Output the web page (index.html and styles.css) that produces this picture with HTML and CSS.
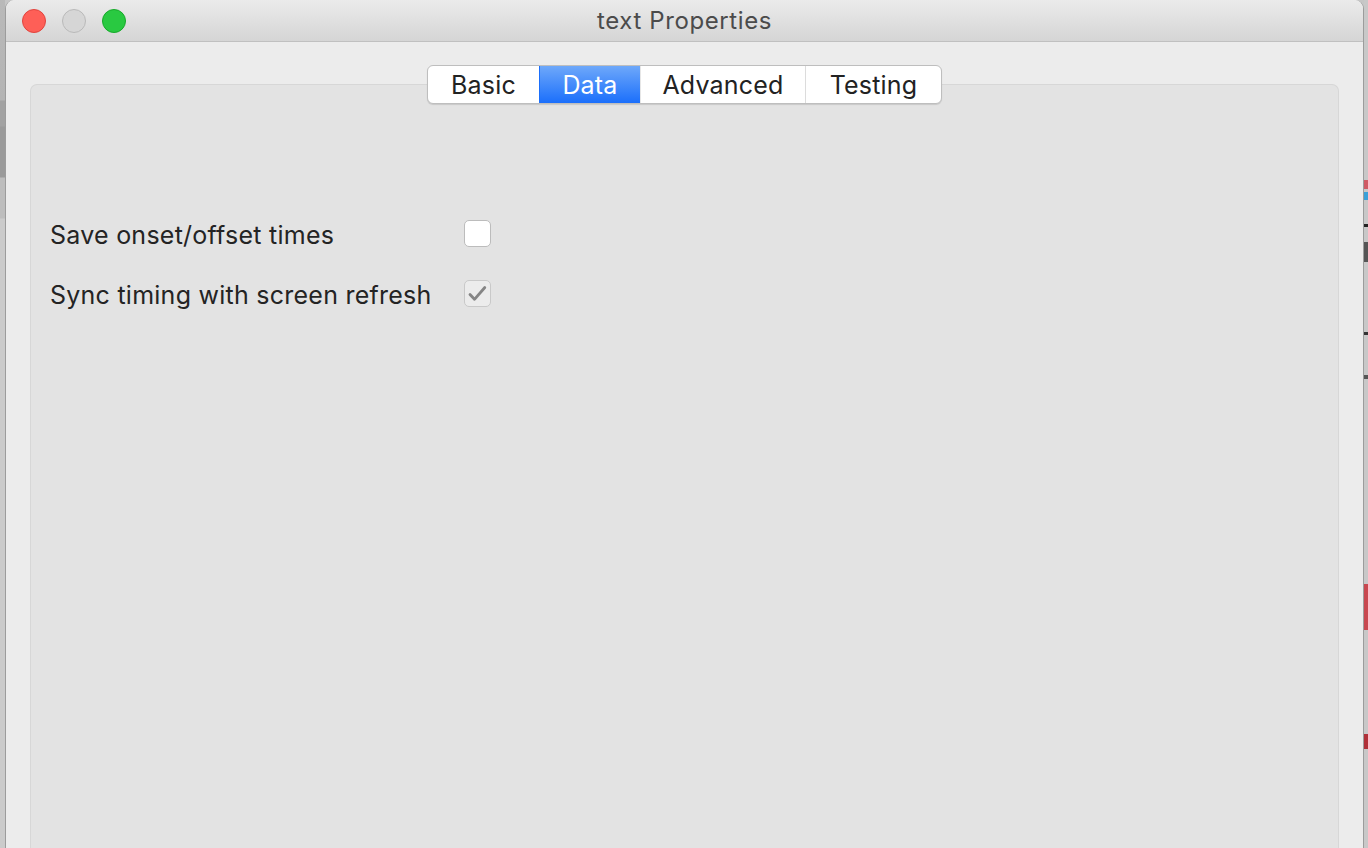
FILE: index.html
```html
<!DOCTYPE html>
<html>
<head>
<meta charset="utf-8">
<title>text Properties</title>
<link rel="stylesheet" href="styles.css">
</head>
<body>
<div class="desk-left"></div>
<div class="window">
  <div class="titlebar">
    <div class="lights">
      <span class="light red"></span>
      <span class="light gray"></span>
      <span class="light green"></span>
    </div>
    <div class="title">text Properties</div>
  </div>
  <div class="content">
    <div class="tabs">
      <div class="tab t-basic">Basic</div>
      <div class="tab t-data active">Data</div>
      <div class="tab t-adv">Advanced</div>
      <div class="tab t-test">Testing</div>
    </div>
    <div class="group">
      <div class="form">
        <div class="label">Save onset/offset times</div>
        <div class="check"></div>
        <div class="label">Sync timing with screen refresh</div>
        <div class="check checked disabled">
          <svg width="25" height="25" viewBox="0 0 25 25"><path d="M5 13.5 L9.5 18.3 L19.8 6.5" fill="none" stroke="#858585" stroke-width="2.8" stroke-linecap="round" stroke-linejoin="round"/></svg>
        </div>
      </div>
    </div>
  </div>
</div>
<div class="desk-right">
  <span class="mark m1"></span>
  <span class="mark m2"></span>
  <span class="mark m3"></span>
  <span class="mark m4"></span>
  <span class="mark m5"></span>
  <span class="mark m6"></span>
  <span class="mark m7"></span>
  <span class="mark m8"></span>
</div>
</body>
</html>
```

FILE: styles.css
```css
html, body {
  margin: 0;
  padding: 0;
  height: 100%;
  overflow: hidden;
}
body {
  display: flex;
  background: #c6c6c6;
  font-family: "Inter", "Liberation Sans", Arial, sans-serif;
}
.desk-left {
  width: 5px;
  flex: none;
  background: linear-gradient(to bottom, #b9b9b9 0, #b4b4b4 100px, #a2a2a2 101px, #a2a2a2 126px, #9a9a9a 127px, #9a9a9a 177px, #bdbdbd 178px, #bdbdbd 218px, #cbcbcb 219px, #cbcbcb 848px);
}
.desk-right {
  width: 4px;
  flex: none;
  display: flex;
  flex-direction: column;
  background: #c8c8c8;
  padding-top: 180px;
}
.mark { display: block; width: 4px; flex: none; }
.m1 { height: 9px; background: #d05a64; }
.m2 { height: 8px; background: #3aa0d8; margin-top: 3px; }
.m3 { height: 3px; background: #222; margin-top: 24px; }
.m4 { height: 20px; background: #555; margin-top: 15px; }
.m5 { height: 3px; background: #333; margin-top: 70px; }
.m6 { height: 4px; background: #555; margin-top: 40px; }
.m7 { height: 46px; background: #c8474f; margin-top: 205px; }
.m8 { height: 15px; background: #b03038; margin-top: 104px; }

.window {
  flex: 1;
  display: flex;
  flex-direction: column;
  background: #ececec;
  border-left: 1px solid #9c9c9c;
  border-right: 1px solid #9c9c9c;
  border-radius: 9px 9px 0 0;
  overflow: hidden;
}
.titlebar {
  height: 41px;
  flex: none;
  position: relative;
  display: flex;
  align-items: center;
  background: linear-gradient(to bottom, #ebebeb, #d5d5d5);
  border-bottom: 1px solid #c0c0c0;
}
.lights {
  display: flex;
  gap: 16px;
  padding-left: 16px;
}
.light {
  width: 22px;
  height: 22px;
  border-radius: 50%;
  border: 1px solid;
  display: block;
}
.red { background: #fe5f57; border-color: #e0443e; }
.gray { background: #d6d6d6; border-color: #b9b9b9; }
.green { background: #29c941; border-color: #17a92a; }
.title {
  position: absolute;
  left: 0;
  right: 0;
  top: 0;
  bottom: 0;
  display: flex;
  align-items: center;
  justify-content: center;
  font-size: 24px;
  letter-spacing: 0.6px;
  color: #4b4b4b;
  pointer-events: none;
}
.content {
  flex: 1;
  display: flex;
  flex-direction: column;
  padding: 23px 24px 0 24px;
}
.tabs {
  align-self: center;
  display: flex;
  height: 37px;
  background: #ffffff;
  border: 1px solid #bebebe;
  border-radius: 6px;
  box-shadow: 0 1px 1px rgba(0,0,0,0.12);
  position: relative;
  z-index: 1;
  overflow: hidden;
}
.tab {
  display: flex;
  align-items: center;
  justify-content: center;
  font-size: 25px;
  letter-spacing: 0.2px;
  color: #222;
  border-left: 1px solid #dcdcdc;
}
.tab:first-child { border-left: none; }
.t-basic { width: 111px; }
.t-data { width: 100px; }
.t-adv { width: 164px; }
.t-test { width: 135px; }
.tab.active {
  background: linear-gradient(to bottom, #6ea8fa, #1b6ffb);
  color: #fff;
  border-left-color: #1b6ffb;
}
.tab.active + .tab { border-left-color: #e6e6e6; }
.group {
  flex: 1;
  margin-top: -20px;
  background: #e3e3e3;
  border: 1px solid #d7d7d7;
  border-bottom: none;
  border-radius: 7px 7px 0 0;
  padding: 135px 0 0 19px;
}
.form {
  display: grid;
  grid-template-columns: 414px 27px;
  grid-auto-rows: 27px;
  row-gap: 33px;
  align-items: center;
}
.label {
  font-size: 25px;
  letter-spacing: 0.25px;
  color: #242424;
  white-space: nowrap;
  position: relative;
  top: 1px;
}
.check {
  width: 25px;
  height: 25px;
  background: #ffffff;
  border: 1px solid #bcbcbc;
  border-radius: 5px;
  display: flex;
  align-items: center;
  justify-content: center;
}
.check.disabled {
  background: #ececec;
  border-color: #c9c9c9;
}
```
